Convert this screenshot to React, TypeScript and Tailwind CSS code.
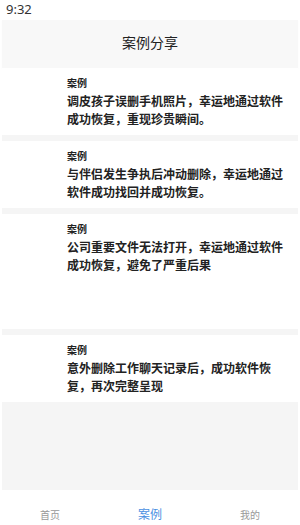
import React from "react";

const cards = [
  { lines: ["调皮孩子误删手机照片，幸运地通过软件", "成功恢复，重现珍贵瞬间。"], extra: false },
  { lines: ["与伴侣发生争执后冲动删除，幸运地通过", "软件成功找回并成功恢复。"], extra: false },
  { lines: ["公司重要文件无法打开，幸运地通过软件", "成功恢复，避免了严重后果"], extra: true },
  { lines: ["意外删除工作聊天记录后，成功软件恢", "复，再次完整呈现"], extra: false },
];

export default function App() {
  return (
    <div
      className="w-[300px] h-[525px] bg-white flex flex-col overflow-hidden"
      style={{ fontFamily: '"Noto Sans", "Noto Sans CJK SC", sans-serif' }}
    >
      <div className="h-[20px] flex items-center pl-[6px] text-[13px] text-[#333]">9:32</div>
      <div className="mx-[2px] flex-1 flex flex-col bg-[#f5f5f5]">
        <div className="h-[48px] pb-[3px] bg-[#f8f8f8] flex items-center justify-center text-[14px] text-[#222] shadow-[0_1px_1px_rgba(0,0,0,0.03)]">
          案例分享
        </div>
        <div className="flex flex-col gap-[6px]">
          {cards.map((c, i) => (
            <div
              key={i}
              className={`bg-white pl-[65px] pr-[8px] pt-[8px] ${c.extra ? "pb-[54px]" : "pb-[6px]"}`}
            >
              <div className="text-[10px] leading-[14px] font-bold text-[#222]">案例</div>
              <div className="mt-[3px] text-[12px] leading-[18px] font-bold text-[#222]">
                {c.lines.map((l, j) => (
                  <div key={j}>{l}</div>
                ))}
              </div>
            </div>
          ))}
        </div>
      </div>
      <div className="h-[35px] flex items-center text-[10px] text-[#999]">
        <div className="flex-1 text-center pt-[16px]">首页</div>
        <div className="flex-1 text-center pt-[14px] text-[12px] text-[#4a90e2]">案例</div>
        <div className="flex-1 text-center pt-[16px]">我的</div>
      </div>
    </div>
  );
}
